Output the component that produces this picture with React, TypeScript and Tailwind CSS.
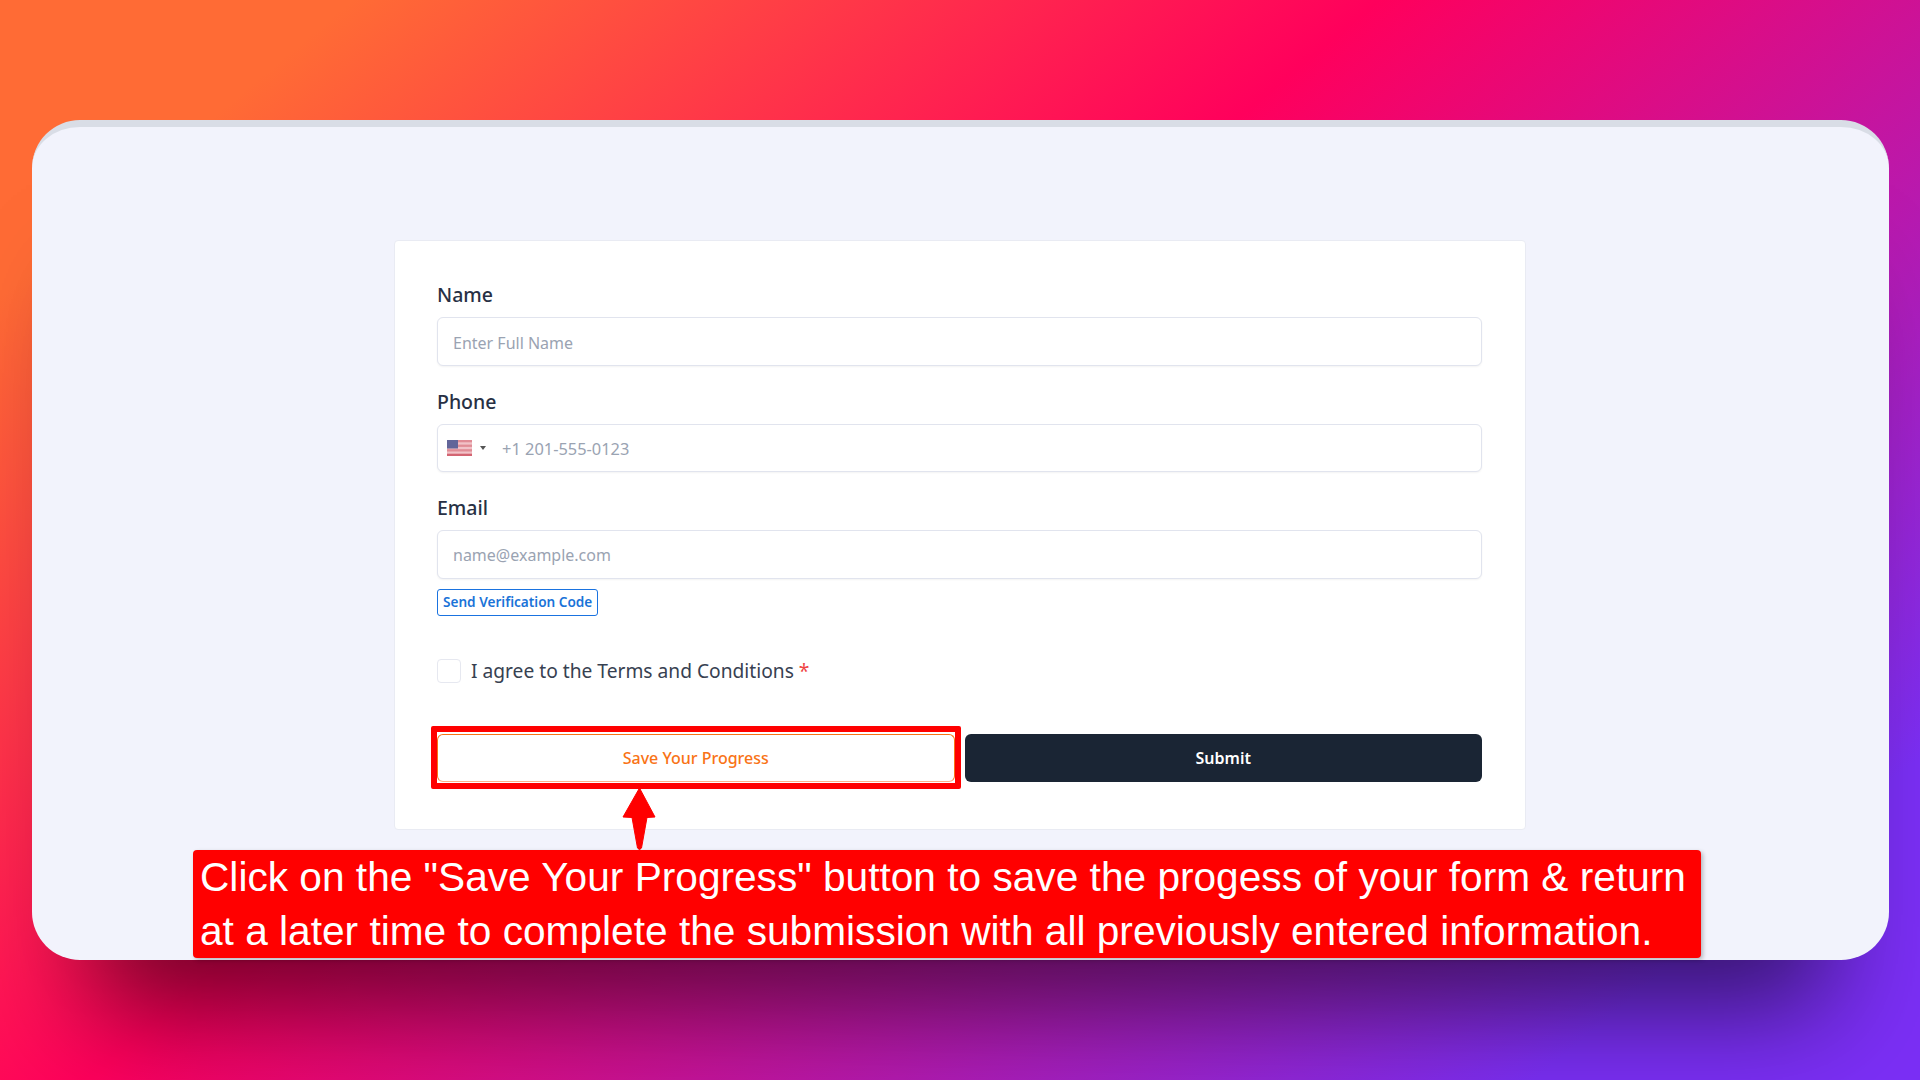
import React from 'react';

const font = { fontFamily: '"Noto Sans", sans-serif' };

function UsFlag() {
  return (
    <svg width="25" height="16" viewBox="0 0 25 16" className="opacity-80 shrink-0">
      <rect width="25" height="16" fill="#eeb4bb" />
      <rect y="0" width="25" height="2.3" fill="#d9707c" />
      <rect y="4.6" width="25" height="2.3" fill="#d9707c" />
      <rect y="9.2" width="25" height="2.3" fill="#d9707c" />
      <rect y="13.7" width="25" height="2.3" fill="#c93f4f" />
      <rect width="11" height="8.5" fill="#3b3f80" />
    </svg>
  );
}

function Field({ label, children }: { label: string; children: React.ReactNode }) {
  return (
    <div>
      <label className="block text-[19.5px] leading-[27px] font-medium text-[#273044] mb-[9px]">{label}</label>
      {children}
    </div>
  );
}

const inputCls =
  'h-[48.5px] w-full bg-white border border-[#e1e4ee] rounded-md text-[16px] text-[#374151] placeholder:text-[#9aa3b2] outline-none shadow-[0_1px_2px_rgba(0,0,0,0.05)]';

export default function App() {
  return (
    <div
      className="relative h-[1080px] w-full overflow-hidden bg-[linear-gradient(140deg,#ff6b35_11%,#ff005c_43%,#7b2ff5_88%)]"
      style={font}
    >
      <div className="pt-[120px] pl-[32px]">
        <div className="relative h-[840px] w-[1857px] rounded-[48px] bg-[#f2f3fc] border-t-[7px] border-[#d9dde6] shadow-[0_110px_100px_-60px_rgba(0,0,0,0.55)] pt-[113px]">
          <div className="ml-[362px] w-[1132px] h-[590px] bg-white border border-[#e9ebf3] rounded pl-[42px] pr-[43px] pt-[40px]">
            <div className="flex flex-col gap-[22px]">
              <Field label="Name">
                <input className={`${inputCls} px-[15px] pt-[3px]`} placeholder="Enter Full Name" />
              </Field>
              <Field label="Phone">
                <div className={`${inputCls} flex items-center pl-[9px] pr-[15px]`}>
                  <UsFlag />
                  <span className="ml-[8px] w-0 h-0 border-x-[3px] border-x-transparent border-t-[4px] border-t-[#555]" />
                  <input
                    className="ml-[16px] flex-1 bg-transparent pt-[3px] text-[16.4px] outline-none placeholder:text-[#9aa3b2]"
                    placeholder="+1 201-555-0123"
                  />
                </div>
              </Field>
              <Field label="Email">
                <input className={`${inputCls} px-[15px] pt-[2px]`} placeholder="name@example.com" />
              </Field>
            </div>

            <button className="block mt-[10px] h-[27.5px] px-[5px] border border-[#1a73e0] rounded-[3px] text-[13.6px] font-semibold text-[#1a73d8]">
              Send Verification Code
            </button>

            <div className="flex items-center mt-[41px]">
              <span className="w-[24px] h-[24px] bg-white border border-[#e6e8f0] rounded" />
              <span className="ml-[10px] text-[19.2px] text-[#374151]">
                I agree to the Terms and Conditions <span className="text-[#ef4444]">*</span>
              </span>
            </div>

            <div className="grid grid-cols-2 gap-[10px] mt-[48px]">
              <button className="h-[48px] border border-[#f97316] border-b-[#ffb088] rounded-md bg-white text-[16px] font-medium text-[#f97316]">
                Save Your Progress
              </button>
              <button className="h-[48px] rounded-md bg-[#1a2534] text-[16px] font-semibold text-white">Submit</button>
            </div>
          </div>
        </div>
      </div>

      {/* annotation on top of the form */}
      <div className="absolute left-[431px] top-[726px] w-[530px] h-[63px] border-[6px] border-[#ff0000] rounded-[2px]" />
      <svg className="absolute left-[620px] top-[786px]" width="40" height="66" viewBox="0 0 40 66">
        <path
          d="M19.5 2 L35 31 L27 31.5 L21.5 62 Q19.5 65 17.5 62 L12 31.5 L3 31 Z"
          fill="#ff0000"
          stroke="#ff0000"
          strokeLinejoin="round"
        />
      </svg>
      <div
        className="absolute left-[193px] top-[850px] w-[1508px] h-[108px] bg-[#ff0000] rounded-[4px] shadow-[2px_2px_4px_rgba(0,0,0,0.25)] pl-[7px] text-white text-[40.65px] leading-[54px] whitespace-nowrap"
        style={{ fontFamily: '"Liberation Sans", Arial, sans-serif' }}
      >
        Click on the "Save Your Progress" button to save the progess of your form &amp; return
        <br />
        at a later time to complete the submission with all previously entered information.
      </div>
    </div>
  );
}
